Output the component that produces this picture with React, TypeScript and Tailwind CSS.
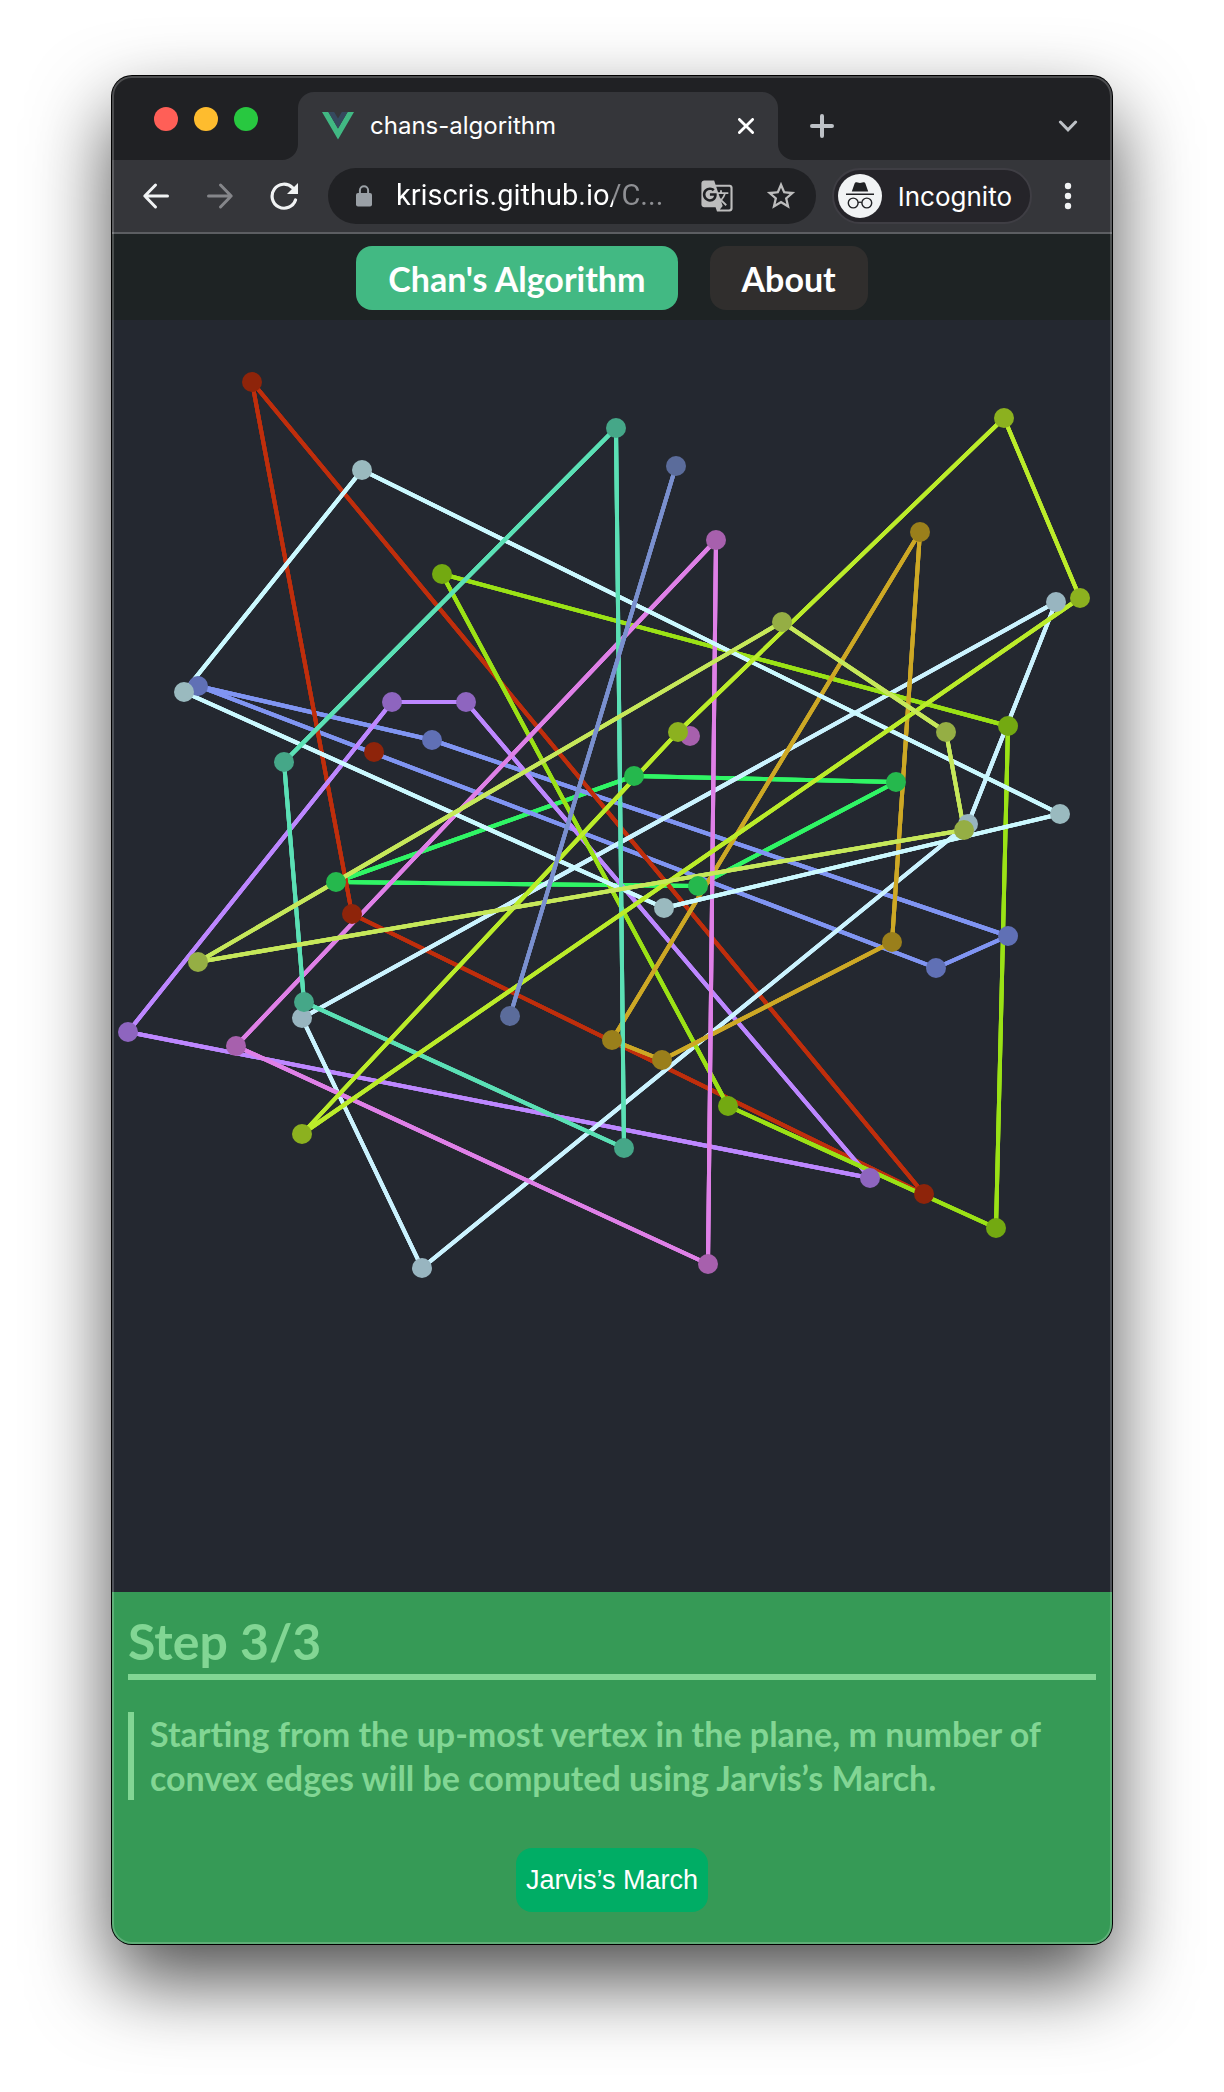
import React from "react";
import { MdGTranslate, MdStarOutline } from "react-icons/md";

type Point = [number, number];

type Group = {
  name: string;
  line: string;
  dot: string;
  path: Point[];
  extra?: Point[];
};

const groups: Group[] = [
  { name: "green", line: "#30f565", dot: "#25b84d", path: [[224, 562], [522, 456], [784, 462], [586, 566]] },
  { name: "blue", line: "#8095f2", dot: "#6070b5", path: [[86, 366], [320, 420], [896, 616], [824, 648]] },
  { name: "red", line: "#bf2e0c", dot: "#8e240a", path: [[140, 62], [812, 874], [240, 594]], extra: [[262, 432]] },
  { name: "purple", line: "#bd87ff", dot: "#8e65bf", path: [[280, 382], [354, 382], [758, 858], [16, 712]] },
  { name: "ice", line: "#cbf3ff", dot: "#98b5c0", path: [[944, 282], [856, 504], [310, 948], [190, 698]] },
  { name: "leaf", line: "#9be216", dot: "#73a911", path: [[330, 254], [896, 406], [884, 908], [616, 786]] },
  { name: "gold", line: "#cda825", dot: "#9a7f1b", path: [[808, 212], [780, 622], [550, 740], [500, 720]] },
  { name: "pink", line: "#df80e7", dot: "#a760ad", path: [[604, 220], [596, 944], [124, 726]], extra: [[578, 416]] },
  { name: "cyan", line: "#cbf9ff", dot: "#9ababf", path: [[250, 150], [948, 494], [552, 588], [72, 372]] },
  { name: "teal", line: "#5be0b5", dot: "#45a788", path: [[504, 108], [512, 828], [192, 682], [172, 442]] },
  { name: "lime", line: "#bbec2a", dot: "#8cb11f", path: [[892, 98], [968, 278], [190, 814], [566, 412]] },
  { name: "olive", line: "#c6e85a", dot: "#95ae44", path: [[670, 302], [834, 412], [852, 510], [86, 642]] },
  { name: "slate", line: "#7a90cf", dot: "#5b6c9b", path: [[564, 146], [398, 696]] },
];

function HullCanvas() {
  return (
    <svg viewBox="0 0 1000 1272" className="block w-full" role="img" aria-label="Convex hulls of point groups">
      {groups.map((g) => {
        const d = "M" + g.path.map((p) => p.join(" ")).join("L") + "Z";
        return (
          <g key={g.name} fill="none" stroke={g.line} strokeWidth="4" strokeLinejoin="round">
            <path d={d} />
            <path d={d} />
            <path d={d} />
          </g>
        );
      })}
      {groups.map((g) =>
        [...g.path, ...(g.extra ?? [])].map(([x, y]) => (
          <circle key={`${g.name}-${x}-${y}`} cx={x} cy={y} r="10" fill={g.dot} />
        )),
      )}
    </svg>
  );
}

function TabFlare({ flip = false }: { flip?: boolean }) {
  return (
    <svg viewBox="0 0 16 16" className="size-4 shrink-0 self-end" aria-hidden="true">
      <path d={flip ? "M0 0V16H16A16 16 0 0 1 0 0Z" : "M16 0V16H0A16 16 0 0 0 16 0Z"} fill="#35363a" />
    </svg>
  );
}

function VueLogo() {
  return (
    <svg viewBox="0 0 32 28" className="h-7 w-8 shrink-0" aria-hidden="true">
      <path d="M0 0H6.4L16 16.4 25.6 0H32L16 27.6Z" fill="#41b883" />
      <path d="M6.4 0H12.2L16 6.6 19.8 0H25.6L16 16.4Z" fill="#35495e" />
    </svg>
  );
}

function TabStrip() {
  return (
    <div className="flex h-21 items-stretch bg-[#202124]">
      <div className="flex shrink-0 items-center gap-4 pl-10.5 pr-6 pt-0.5">
        <button type="button" aria-label="Close window" className="size-6 rounded-full bg-[#ff5f57]" />
        <button type="button" aria-label="Minimize window" className="size-6 rounded-full bg-[#febc2e]" />
        <button type="button" aria-label="Zoom window" className="size-6 rounded-full bg-[#28c840]" />
      </div>
      <TabFlare />
      <div className="mt-4 flex w-[480px] min-w-0 items-center rounded-t-2xl bg-[#35363a] px-6 text-white">
        <VueLogo />
        <span className="min-w-0 flex-1 truncate pl-4 font-['Inter','Liberation_Sans',sans-serif] text-2xl">
          chans-algorithm
        </span>
        <button type="button" aria-label="Close tab" className="shrink-0">
          <svg viewBox="0 0 16 16" className="size-4" fill="none" stroke="currentColor" strokeWidth="2.8" strokeLinecap="round">
            <path d="M1.4 1.4 14.6 14.6M14.6 1.4 1.4 14.6" />
          </svg>
        </button>
      </div>
      <TabFlare flip />
      <div className="flex flex-1 items-center justify-between pl-4 pr-8.5 pt-4 text-[#bdc1c6]">
        <button type="button" aria-label="New tab">
          <svg viewBox="0 0 24 24" className="size-6" fill="none" stroke="currentColor" strokeWidth="4" strokeLinecap="round">
            <path d="M12 2V22M2 12H22" />
          </svg>
        </button>
        <button type="button" aria-label="Search tabs">
          <svg viewBox="0 0 20 12" className="h-3 w-5" fill="none" stroke="currentColor" strokeWidth="3" strokeLinecap="round">
            <path d="M2.4 2 10 9.8 17.6 2" />
          </svg>
        </button>
      </div>
    </div>
  );
}

function IncognitoIcon() {
  return (
    <svg viewBox="0 0 44 44" className="size-11 shrink-0" aria-hidden="true">
      <circle cx="22" cy="22" r="22" fill="#f1f3f4" />
      <path d="M13.8 17.6 16.6 9.4Q17.2 8 18.6 8.3L22 9 25.4 8.3Q26.8 8 27.4 9.4L30.2 17.6Z" fill="#202124" />
      <path d="M8 19.4H36V21H8Z" fill="#202124" />
      <g fill="none" stroke="#202124" strokeWidth="1.4">
        <circle cx="15.2" cy="29" r="4.9" />
        <circle cx="28.8" cy="29" r="4.9" />
        <path d="M20.1 28.6Q22 27.6 23.9 28.6" />
      </g>
    </svg>
  );
}

function Toolbar() {
  return (
    <div className="flex items-center border-b-2 border-[#5c5e62] bg-[#35363a] py-2 pl-7.5 pr-10 font-['Inter','Liberation_Sans',sans-serif]">
      <div className="flex shrink-0 gap-9">
        <button type="button" aria-label="Back" className="text-[#f1f3f4]">
          <svg viewBox="0 0 28 28" className="size-7" fill="none" stroke="currentColor" strokeWidth="3" strokeLinecap="round" strokeLinejoin="round">
            <path d="M25.5 14H3M13.5 3 2.8 14 13.5 25" />
          </svg>
        </button>
        <button type="button" aria-label="Forward" className="text-[#85868a]">
          <svg viewBox="0 0 28 28" className="size-7" fill="none" stroke="currentColor" strokeWidth="3" strokeLinecap="round" strokeLinejoin="round">
            <path d="M2.5 14H25M14.5 3 25.2 14 14.5 25" />
          </svg>
        </button>
        <button type="button" aria-label="Reload" className="text-[#f1f3f4]">
          <svg viewBox="0 0 28 28" className="size-7" fill="none" stroke="currentColor" strokeWidth="3.2" strokeLinecap="round">
            <path d="M25.5 18A12 12 0 1 1 22.5 5.6" />
            <path d="M28 1V12H17Z" fill="currentColor" stroke="none" />
          </svg>
        </button>
      </div>
      <div className="ml-7.5 flex h-14 min-w-0 flex-1 items-center rounded-full bg-[#202124] pl-7 pr-4.5">
        <svg viewBox="0 0 16 22" className="h-5.5 w-4 shrink-0" aria-hidden="true">
          <path d="M3.9 9V5.3a4.1 4.1 0 0 1 8.2 0V9" fill="none" stroke="#9aa0a6" strokeWidth="2" />
          <rect y="8" width="16" height="13.5" rx="2" fill="#9aa0a6" />
        </svg>
        <input
          type="text"
          aria-label="Address and search bar"
          defaultValue="kriscris.github.io/C..."
          className="ml-6 min-w-0 flex-1 bg-transparent bg-[linear-gradient(90deg,#ffffff_217px,#8f9094_217px)] bg-clip-text font-['Roboto','Liberation_Sans',sans-serif] text-[29px] text-transparent caret-white outline-none"
        />
        <button type="button" aria-label="Translate this page" className="ml-4 shrink-0 text-[#bdbdbd]">
          <MdGTranslate className="size-8.5" />
        </button>
        <button type="button" aria-label="Bookmark this tab" className="ml-7.5 shrink-0 text-[#bdbdbd]">
          <MdStarOutline className="size-8.5" />
        </button>
      </div>
      <button
        type="button"
        className="ml-4 flex h-14 shrink-0 items-center gap-4 rounded-full border-2 border-[#3f3e44] bg-[#252429] pl-1 pr-4.5 text-[26px] text-white"
      >
        <IncognitoIcon />
        Incognito
      </button>
      <button type="button" aria-label="Chrome menu" className="ml-8 shrink-0 text-[#f1f3f4]">
        <svg viewBox="0 0 8 28" className="h-7 w-2" fill="currentColor">
          <circle cx="4" cy="4" r="3.2" />
          <circle cx="4" cy="14" r="3.2" />
          <circle cx="4" cy="24" r="3.2" />
        </svg>
      </button>
    </div>
  );
}

function SiteNav() {
  return (
    <nav className="flex flex-wrap justify-center gap-8 bg-[#1e2324] px-4 pb-2.5 pt-3 font-['Lato','Liberation_Sans',sans-serif] text-[34px] font-bold text-white">
      <a href="#algorithm" aria-current="page" className="flex h-16 items-center rounded-2xl bg-[#42b983] px-8">
        Chan's Algorithm
      </a>
      <a href="#about" className="flex h-16 items-center rounded-2xl bg-[#302e2d] px-8">
        About
      </a>
    </nav>
  );
}

function StepPanel() {
  return (
    <section className="flex flex-col bg-[#369a56] px-4 pb-8 pt-4 font-['Lato','Liberation_Sans',sans-serif] font-bold text-[#82d694]">
      <h1 className="border-b-6 border-[#82d694] text-[50px] leading-[66px]">Step 3/3</h1>
      <blockquote className="mt-8 border-l-6 border-[#82d694] pl-4 text-[34px] leading-11">
        Starting from the up-most vertex in the plane, m number of convex edges will be computed using Jarvis’s March.
      </blockquote>
      <button
        type="button"
        className="mt-12 h-16 self-center rounded-2xl bg-[#00ad65] px-2.5 font-['Liberation_Sans',sans-serif] text-[27px] font-normal text-white"
      >
        Jarvis’s March
      </button>
    </section>
  );
}

export default function App() {
  return (
    <div className="bg-white px-28 pb-37 pt-19">
      <div className="relative overflow-hidden rounded-[20px] bg-[#242830] shadow-[0_0_0_1px_#000,0_36px_80px_rgba(0,0,0,0.7)]">
        <TabStrip />
        <Toolbar />
        <main>
          <SiteNav />
          <HullCanvas />
          <StepPanel />
        </main>
        <div className="pointer-events-none absolute inset-0 rounded-[20px] border-2 border-white/20" />
      </div>
    </div>
  );
}
